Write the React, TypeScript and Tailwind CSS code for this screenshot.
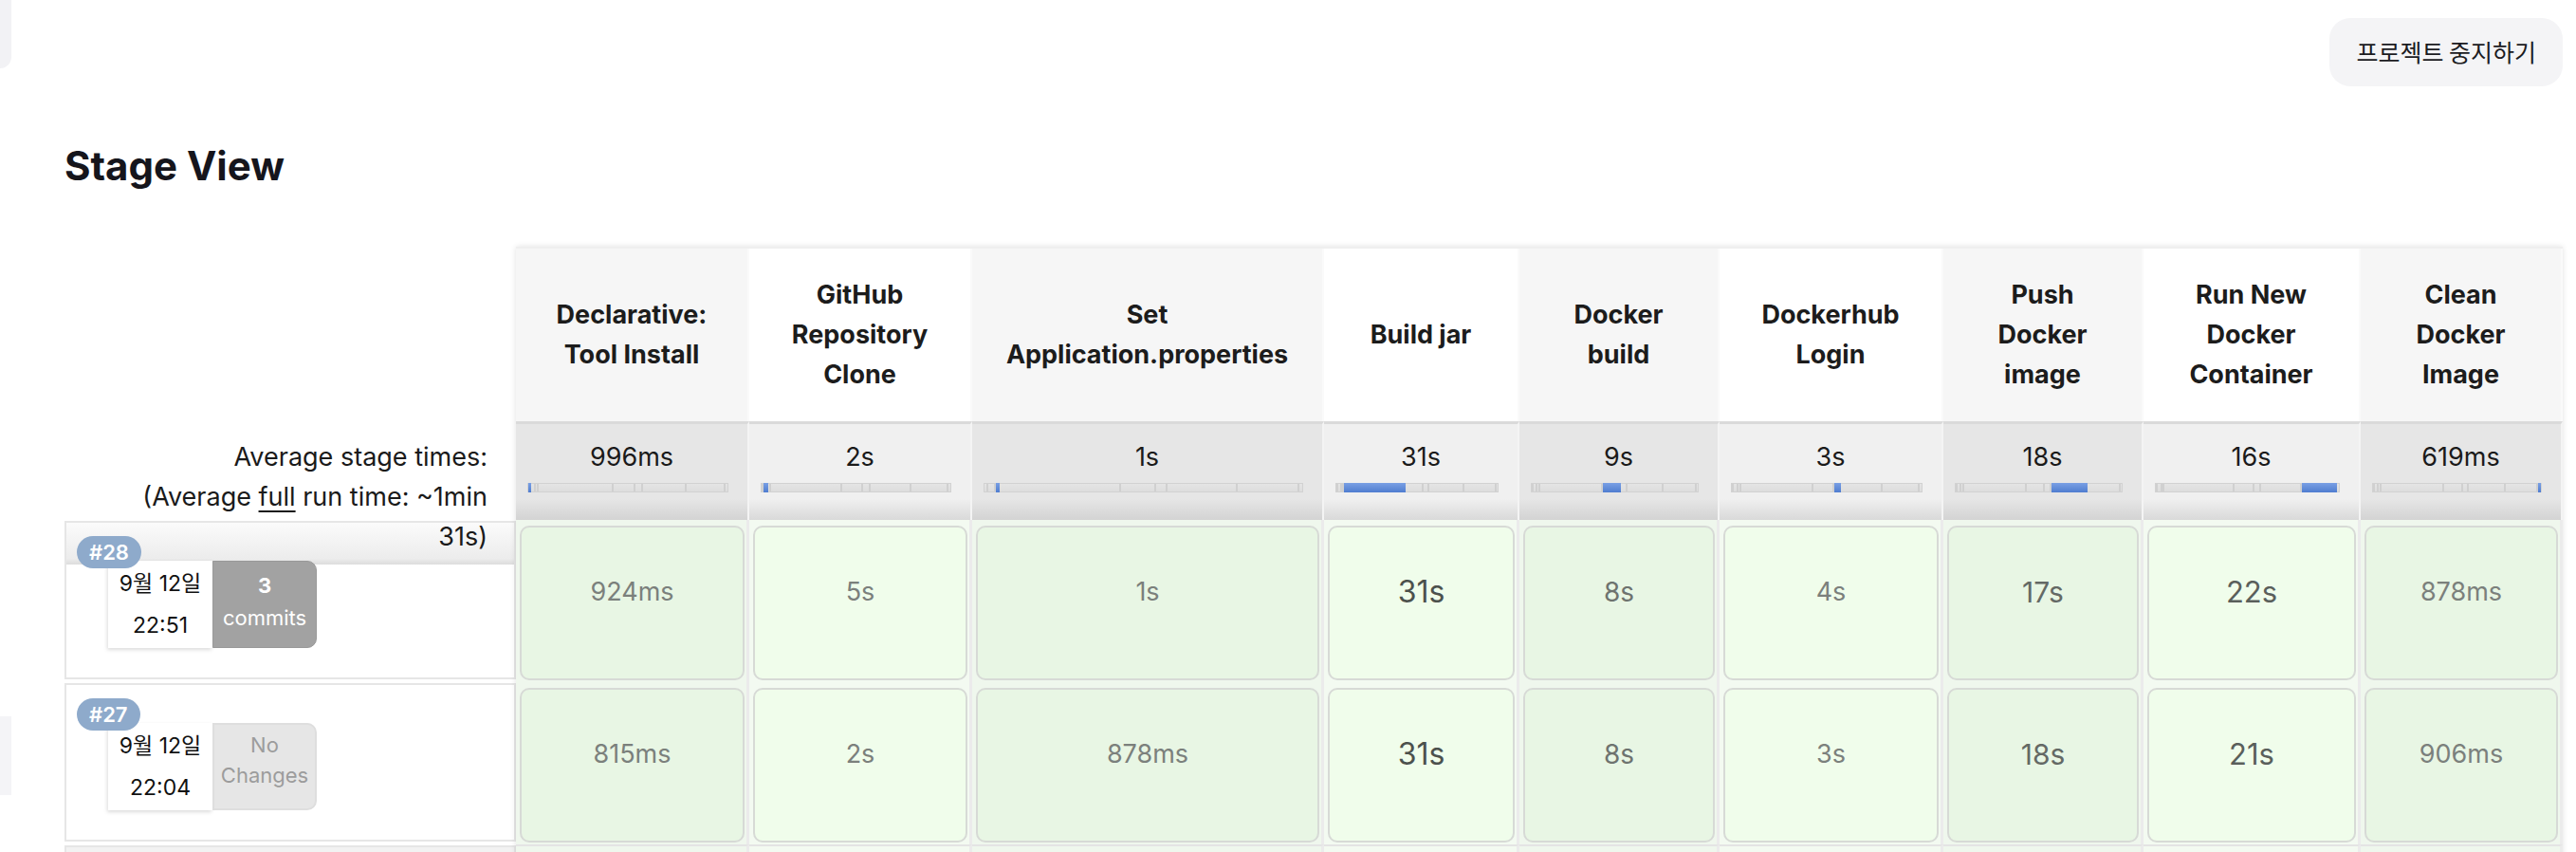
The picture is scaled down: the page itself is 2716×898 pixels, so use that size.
import React from "react";

type Stage = {
  lines: string[];
  w: string;
  avg: string;
  sec: number;
  head: string;
  avgBg: string;
  outer: string;
  inner: string;
};

const stages: Stage[] = [
  { lines: ["Declarative:", "Tool Install"], w: "w-[246px]", avg: "996ms", sec: 0.996, head: "bg-[#f6f6f6]", avgBg: "bg-[linear-gradient(to_bottom,#e6e6e6_0%,#e6e6e6_78%,#d3d3d3_100%)]", outer: "bg-[#eff7ed]", inner: "bg-[#e8f6e4]" },
  { lines: ["GitHub", "Repository", "Clone"], w: "w-[235px]", avg: "2s", sec: 2, head: "bg-white", avgBg: "bg-[linear-gradient(to_bottom,#f0f0f0_0%,#f0f0f0_78%,#d9d9d9_100%)]", outer: "bg-[#f3faf1]", inner: "bg-[#f0fdeb]" },
  { lines: ["Set", "Application.properties"], w: "w-[371px]", avg: "1s", sec: 1, head: "bg-[#f6f6f6]", avgBg: "bg-[linear-gradient(to_bottom,#e6e6e6_0%,#e6e6e6_78%,#d3d3d3_100%)]", outer: "bg-[#eff7ed]", inner: "bg-[#e8f6e4]" },
  { lines: ["Build jar"], w: "w-[206px]", avg: "31s", sec: 31, head: "bg-white", avgBg: "bg-[linear-gradient(to_bottom,#f0f0f0_0%,#f0f0f0_78%,#d9d9d9_100%)]", outer: "bg-[#f3faf1]", inner: "bg-[#f0fdeb]" },
  { lines: ["Docker", "build"], w: "w-[211px]", avg: "9s", sec: 9, head: "bg-[#f6f6f6]", avgBg: "bg-[linear-gradient(to_bottom,#e6e6e6_0%,#e6e6e6_78%,#d3d3d3_100%)]", outer: "bg-[#eff7ed]", inner: "bg-[#e8f6e4]" },
  { lines: ["Dockerhub", "Login"], w: "w-[236px]", avg: "3s", sec: 3, head: "bg-white", avgBg: "bg-[linear-gradient(to_bottom,#f0f0f0_0%,#f0f0f0_78%,#d9d9d9_100%)]", outer: "bg-[#f3faf1]", inner: "bg-[#f0fdeb]" },
  { lines: ["Push", "Docker", "image"], w: "w-[211px]", avg: "18s", sec: 18, head: "bg-[#f6f6f6]", avgBg: "bg-[linear-gradient(to_bottom,#e6e6e6_0%,#e6e6e6_78%,#d3d3d3_100%)]", outer: "bg-[#eff7ed]", inner: "bg-[#e8f6e4]" },
  { lines: ["Run New", "Docker", "Container"], w: "w-[229px]", avg: "16s", sec: 16, head: "bg-white", avgBg: "bg-[linear-gradient(to_bottom,#f0f0f0_0%,#f0f0f0_78%,#d9d9d9_100%)]", outer: "bg-[#f3faf1]", inner: "bg-[#f0fdeb]" },
  { lines: ["Clean", "Docker", "Image"], w: "w-[213px]", avg: "619ms", sec: 0.619, head: "bg-[#f6f6f6]", avgBg: "bg-[linear-gradient(to_bottom,#e6e6e6_0%,#e6e6e6_78%,#d3d3d3_100%)]", outer: "bg-[#eff7ed]", inner: "bg-[#e8f6e4]" },
];

const builds = [
  {
    id: "#28",
    date: "9월 12일",
    time: "22:51",
    changes: "3",
    values: [
      ["924ms", 0.9], ["5s", 5], ["1s", 1], ["31s", 31], ["8s", 8], ["4s", 4], ["17s", 17], ["22s", 22], ["878ms", 0.9],
    ] as [string, number][],
  },
  {
    id: "#27",
    date: "9월 12일",
    time: "22:04",
    changes: "",
    values: [
      ["815ms", 0.8], ["2s", 2], ["878ms", 0.9], ["31s", 31], ["8s", 8], ["3s", 3], ["18s", 18], ["21s", 21], ["906ms", 0.9],
    ] as [string, number][],
  },
];

// bigger and darker text for longer stages
const durationText = (sec: number) => {
  if (sec >= 30) return "text-[32px] text-[#4c514d]";
  if (sec >= 20) return "text-[31px] text-[#5a5f5b]";
  if (sec >= 15) return "text-[30px] text-[#646965]";
  if (sec >= 6) return "text-[28px] text-[#6e736f]";
  return "text-[27px] text-[#7b807c]";
};

const total = stages.reduce((s, st) => s + st.sec, 0);

const TimeBar = ({ active }: { active: number }) => (
  <div className="mt-[8px] ml-[12px] mr-[20px] h-[10px] flex bg-[#d2d2d2] p-[1px]">
    {stages.map((st, i) => (
      <div
        key={i}
        style={{ width: `${(st.sec / total) * 100}%` }}
        className={
          i === active
            ? "h-[10px] -mt-[1px] min-w-[3px] bg-[linear-gradient(to_bottom,#7aa0e4,#4f7dd0)]"
            : "h-full border-r-2 border-[#d0d0d0] last:border-r-0 bg-[linear-gradient(to_bottom,#e4e4e4,#dddddd)]"
        }
      />
    ))}
  </div>
);

export default function App() {
  return (
    <div className="relative w-[2716px] h-[898px] overflow-hidden bg-white font-['Inter','Noto_Sans_CJK_KR',sans-serif] text-[#1a1a1a]">
      <div className="absolute left-0 top-0 w-[12px] h-[72px] rounded-br-[14px] bg-[#f2f2f5]" />
      <div className="absolute left-0 top-[755px] w-[12px] h-[83px] bg-[#f4f4f7]" />

      <div className="flex justify-end pt-[19px] pr-[14px]">
        <button className="h-[72px] px-[28px] rounded-[22px] bg-[#f4f4f6] text-[25px] text-[#1b1b1f] font-['Noto_Sans_CJK_KR',sans-serif]">
          프로젝트 중지하기
        </button>
      </div>

      <h2 className="mt-[58px] pl-[68px] text-[42px] leading-[52px] font-bold text-[#15151c]">Stage View</h2>

      <div className="mt-[59px] ml-[68px] flex">
        {/* left column */}
        <div className="w-[476px] shrink-0">
          <div className="h-[184px]" />
          <div className="relative z-10 h-[104px] pt-[17px] pr-[30px] text-right text-[27px] leading-[42px] text-[#1a1a1a]">
            Average stage times:
            <br />
            (Average <span className="underline underline-offset-[5px]">full</span> run time: ~1min
            <br />
            31s)
          </div>
          {builds.map((b, bi) => (
            <div key={b.id} className="h-[171px] pt-[1px]">
              <div
                className={
                  bi === 0
                    ? "h-[167px] border-2 border-[#e6e6e6] pl-[11px] pt-[14px] bg-[linear-gradient(to_bottom,#fbfbfb_0px,#ececec_38px,#dcdcdc_44px,#ffffff_44px)]"
                    : "h-[167px] border-2 border-[#e6e6e6] pl-[11px] pt-[14px] bg-white"
                }
              >
                <div className="relative z-10 inline-flex h-[34px] px-[13px] items-center rounded-full bg-[#8eaacb] text-white text-[22px] font-semibold">
                  {b.id}
                </div>
                <div className="-mt-[8px] ml-[33px] flex">
                  <div className="w-[110px] h-[92px] flex flex-col items-center pt-[2px] bg-white shadow-[-1px_2px_4px_rgba(0,0,0,0.14)] text-[23px] leading-[44px] text-[#111]">
                    <span>{b.date}</span>
                    <span>{b.time}</span>
                  </div>
                  {b.changes ? (
                    <div className="w-[110px] h-[92px] flex flex-col items-center pt-[8px] rounded-r-[10px] bg-[#a2a2a2] border border-[#999] text-white text-[22px] leading-[34px]">
                      <span className="font-bold">{b.changes}</span>
                      <span>commits</span>
                    </div>
                  ) : (
                    <div className="w-[110px] h-[92px] flex flex-col items-center pt-[5px] rounded-r-[10px] bg-[#e6e6e6] border-2 border-[#dedede] text-[#9c9c9c] text-[22px] leading-[32px]">
                      <span>No</span>
                      <span>Changes</span>
                    </div>
                  )}
                </div>
              </div>
            </div>
          ))}
          <div className="h-[20px] mt-[1px] border-2 border-[#e6e6e6] bg-[#f2f2f2]" />
        </div>

        {/* stage columns */}
        <div className="w-[2158px] shrink-0 border-t-2 border-[#efefef] shadow-[0_0_6px_rgba(0,0,0,0.12)]">
          <div className="flex">
            {stages.map((st, i) => (
              <div
                key={i}
                className={`${st.w} ${st.head} h-[182px] shrink-0 flex flex-col items-center justify-center border-r-2 border-[#fafafa] text-[27px] leading-[42px] font-bold text-[#1c1c1c] text-center`}
              >
                {st.lines.map((l) => (
                  <span key={l}>{l}</span>
                ))}
              </div>
            ))}
          </div>
          <div className="flex">
            {stages.map((st, i) => (
              <div
                key={i}
                className={`${st.w} ${st.avgBg} h-[104px] shrink-0 border-t-[3px] border-t-[#dadada] border-r-2 border-r-[#f4f4f4] pt-[16px]`}
              >
                <div className="text-center text-[27px] leading-[38px] text-[#1a1a1a]">{st.avg}</div>
                <TimeBar active={i} />
              </div>
            ))}
          </div>
          {builds.map((b) => (
            <div key={b.id} className="flex">
              {stages.map((st, i) => (
                <div
                  key={i}
                  className={`${st.w} ${st.outer} h-[171px] shrink-0 border-r-[3px] border-[#ebebeb] pl-[4px] pr-[2px] pt-[6px]`}
                >
                  <div className={`${st.inner} h-[163px] rounded-[10px] border-2 border-[#d7dad6] pt-[48px] flex justify-center`}>
                    <span className={`${durationText(b.values[i][1])} leading-[40px]`}>{b.values[i][0]}</span>
                  </div>
                </div>
              ))}
            </div>
          ))}
          <div className="flex">
            {stages.map((st, i) => (
              <div key={i} className={`${st.w} ${st.outer} h-[40px] shrink-0 border-t-2 border-[#e4e4e4] border-r-[3px] border-r-[#ebebeb] pl-[4px] pr-[2px] pt-[6px]`}>
                <div className={`${st.inner} h-[40px] rounded-t-[10px] border-2 border-[#d7dad6]`} />
              </div>
            ))}
          </div>
        </div>
      </div>
    </div>
  );
}
